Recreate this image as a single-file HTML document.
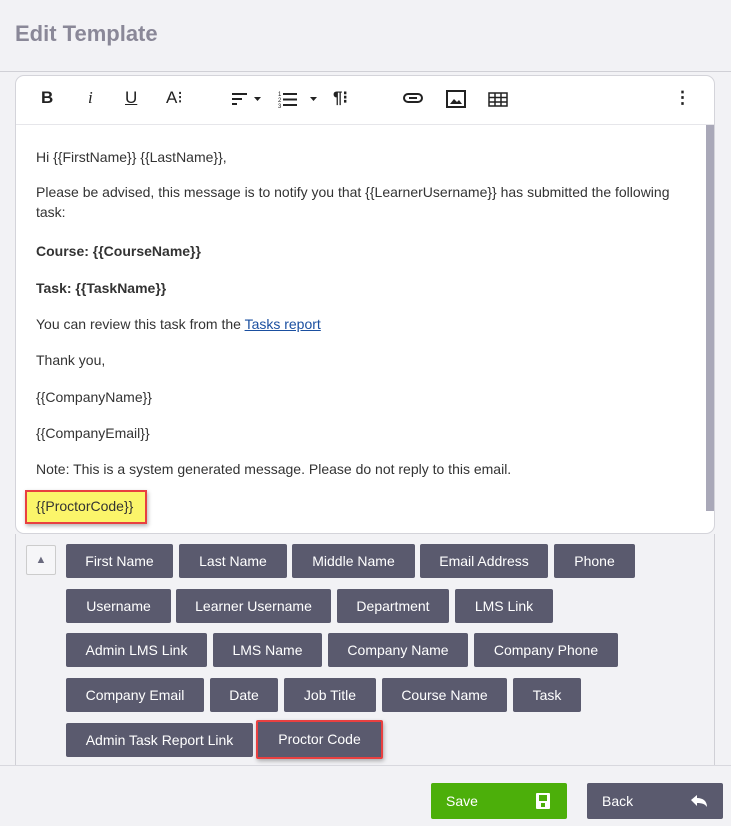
<!DOCTYPE html>
<html><head><style>
*{box-sizing:border-box;margin:0;padding:0}
body{width:731px;height:826px;background:#f2f2f5;font-family:"Liberation Sans",sans-serif;position:relative;overflow:hidden;color:#333}
.a{position:absolute}
h1{position:absolute;left:15px;top:21px;font-size:22px;font-weight:bold;color:#8a8898}
.card{left:15px;top:75px;width:700px;height:459px;background:#fff;border:1px solid #d4d4da;border-radius:9px}
.tb{left:0;top:48px;width:698px;height:1px;background:#e6e6ea}
.t{position:absolute;left:36px;font-size:14px;line-height:16px;white-space:nowrap}
.btn{position:absolute;height:34px;background:#5a5a6e;color:#fff;font-size:14px;line-height:34px;text-align:center;border-radius:2px}
.ic{position:absolute;top:88px;font-size:17px;color:#222}
</style></head><body>
<h1>Edit Template</h1>
<div class="a" style="left:0;top:71px;width:731px;height:1px;background:#d0d0d6"></div>
<div class="a card">
<div class="a tb"></div>
<div class="a" style="left:690px;top:49px;width:8px;height:386px;background:#a9a8b8"></div>
</div>
<div class="ic" style="left:41px;font-weight:bold">B</div>
<div class="ic" style="left:88px;font-style:italic;font-family:'Liberation Serif',serif">i</div>
<div class="ic" style="left:125px;text-decoration:underline">U</div>
<div class="ic" style="left:166px">A⁝</div>
<svg class="a" style="left:232px;top:92px" width="32" height="14"><path d="M0 2h15M0 7h10M0 12h5" stroke="#222" stroke-width="2"/><path d="M22 5h7l-3.5 4z" fill="#222"/></svg>
<svg class="a" style="left:278px;top:90px" width="42" height="18"><text x="0" y="6" font-size="6" fill="#222">1</text><text x="0" y="12" font-size="6" fill="#222">2</text><text x="0" y="18" font-size="6" fill="#222">3</text><path d="M5 4h14M5 9.5h14M5 15h14" stroke="#222" stroke-width="2"/><path d="M32 7h7l-3.5 4z" fill="#222"/></svg>
<div class="ic" style="left:333px;font-weight:bold">¶⁝</div>
<svg class="a" style="left:403px;top:92px" width="20" height="12"><rect x="1" y="2" width="18" height="8" rx="4" fill="none" stroke="#222" stroke-width="2"/><line x1="6" y1="6" x2="14" y2="6" stroke="#222" stroke-width="2"/></svg>
<svg class="a" style="left:446px;top:90px" width="20" height="18"><rect x="1" y="1" width="18" height="16" fill="none" stroke="#222" stroke-width="2"/><path d="M4 14l4-5 3 3 2-2 3 4z" fill="#222"/></svg>
<svg class="a" style="left:488px;top:92px" width="20" height="15"><rect x="1" y="1" width="18" height="13" fill="none" stroke="#222" stroke-width="1.5"/><path d="M1 5.5h18M1 10h18M7 1v13M13 1v13" stroke="#222" stroke-width="1.5"/></svg>
<div class="ic" style="left:674px;font-weight:bold">⋮</div>

<div class="t" style="top:149px">Hi {{FirstName}} {{LastName}},</div>
<div class="t" style="top:184px">Please be advised, this message is to notify you that {{LearnerUsername}} has submitted the following</div>
<div class="t" style="top:204px">task:</div>
<div class="t" style="top:243px;font-weight:bold">Course: {{CourseName}}</div>
<div class="t" style="top:280px;font-weight:bold">Task: {{TaskName}}</div>
<div class="t" style="top:316px">You can review this task from the <span style="color:#1a4fa0;text-decoration:underline">Tasks report</span></div>
<div class="t" style="top:352px">Thank you,</div>
<div class="t" style="top:389px">{{CompanyName}}</div>
<div class="t" style="top:425px">{{CompanyEmail}}</div>
<div class="t" style="top:461px">Note: This is a system generated message. Please do not reply to this email.</div>
<div class="a" style="left:25px;top:490px;width:122px;height:34px;background:#fbf56a;border:2px solid #e84040;box-shadow:1px 2px 4px rgba(0,0,0,.3)"></div>
<div class="t" style="top:498px">{{ProctorCode}}</div>

<div class="a" style="left:15px;top:534px;width:1px;height:231px;background:#d0d0d6"></div>
<div class="a" style="left:714px;top:534px;width:1px;height:231px;background:#d0d0d6"></div>
<div class="a" style="left:0;top:765px;width:731px;height:1px;background:#d8d8de"></div>
<div class="a" style="left:26px;top:545px;width:30px;height:30px;border:1px solid #ccc;background:#f6f6f8;border-radius:2px;text-align:center;line-height:28px;font-size:11px;color:#6a6a7e">▲</div>

<div class="btn" style="left:66px;top:544px;width:107px">First Name</div>
<div class="btn" style="left:179px;top:544px;width:108px">Last Name</div>
<div class="btn" style="left:292px;top:544px;width:123px">Middle Name</div>
<div class="btn" style="left:420px;top:544px;width:128px">Email Address</div>
<div class="btn" style="left:554px;top:544px;width:81px">Phone</div>
<div class="btn" style="left:66px;top:589px;width:105px">Username</div>
<div class="btn" style="left:176px;top:589px;width:155px">Learner Username</div>
<div class="btn" style="left:337px;top:589px;width:112px">Department</div>
<div class="btn" style="left:455px;top:589px;width:98px">LMS Link</div>
<div class="btn" style="left:66px;top:633px;width:141px">Admin LMS Link</div>
<div class="btn" style="left:213px;top:633px;width:109px">LMS Name</div>
<div class="btn" style="left:328px;top:633px;width:140px">Company Name</div>
<div class="btn" style="left:474px;top:633px;width:144px">Company Phone</div>
<div class="btn" style="left:66px;top:678px;width:138px">Company Email</div>
<div class="btn" style="left:210px;top:678px;width:68px">Date</div>
<div class="btn" style="left:284px;top:678px;width:92px">Job Title</div>
<div class="btn" style="left:382px;top:678px;width:125px">Course Name</div>
<div class="btn" style="left:513px;top:678px;width:68px">Task</div>
<div class="btn" style="left:66px;top:723px;width:187px">Admin Task Report Link</div>
<div class="btn" style="left:256px;top:720px;width:127px;height:39px;line-height:35px;border:2px solid #e84040;box-shadow:1px 2px 4px rgba(0,0,0,.3)">Proctor Code</div>

<div class="btn" style="left:431px;top:783px;width:136px;height:36px;line-height:36px;background:#4caf0a;text-align:left;padding-left:15px">Save
<svg class="a" style="left:105px;top:10px" width="14" height="16"><rect x="0" y="0" width="14" height="16" rx="1" fill="#fff"/><rect x="3" y="2" width="8" height="6" fill="#4caf0a"/><rect x="5" y="10" width="4" height="4" fill="#4caf0a"/></svg></div>
<div class="btn" style="left:587px;top:783px;width:136px;height:36px;line-height:36px;text-align:left;padding-left:15px">Back
<svg class="a" style="left:103px;top:11px" width="18" height="14"><path d="M1 6l6-5v3c6 0 10 3 10 9-2-3-5-4-10-4v3z" fill="#fff"/></svg></div>
</body></html>
